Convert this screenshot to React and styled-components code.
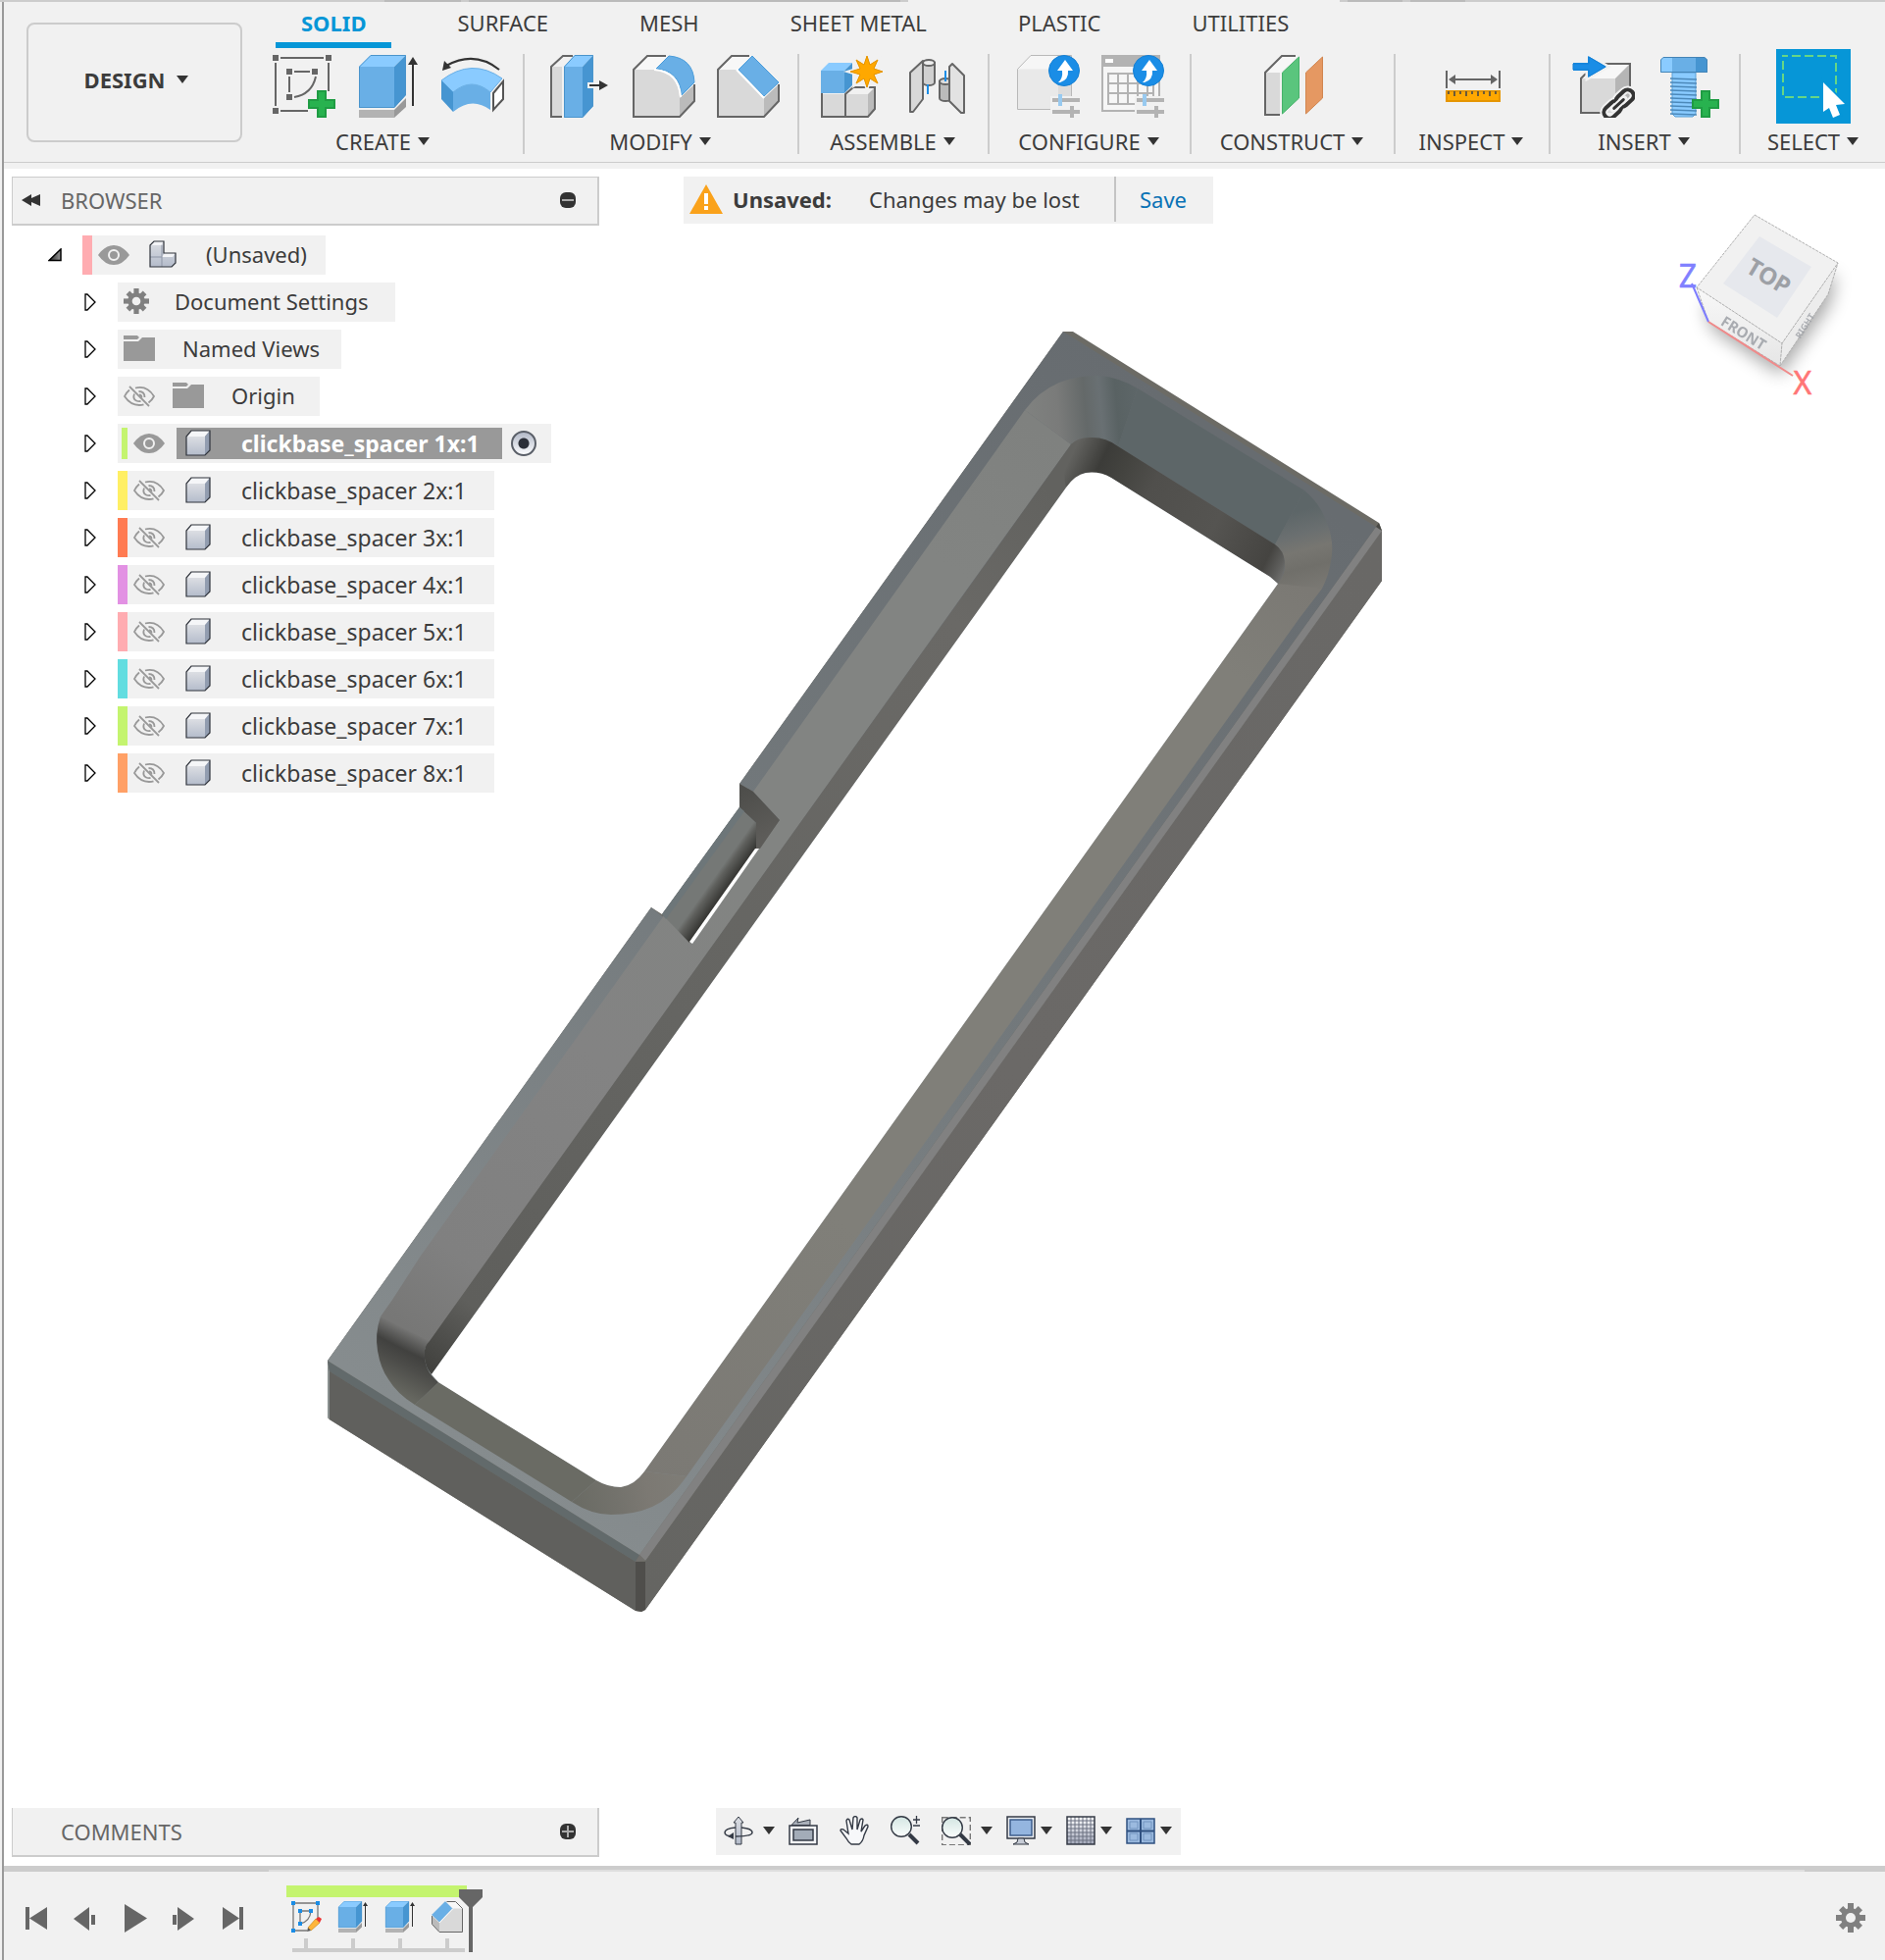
import React from "react";
import styled, { createGlobalStyle } from "styled-components";

const GlobalStyle = createGlobalStyle`
  *, *::before, *::after { box-sizing: border-box; }
  body {
    margin: 0;
    background: #f1f1f1;
    color: #3c3c3c;
    font: 22px/30px "Noto Sans", "Open Sans", sans-serif;
  }
  button {
    display: inline-flex;
    align-items: center;
    justify-content: center;
    margin: 0;
    padding: 0;
    border: 0;
    background: none;
    color: inherit;
    font: inherit;
    cursor: pointer;
  }
  svg { display: block; flex: none; }
  ul { margin: 0; padding: 0; list-style: none; }
`;

/* ---------- frame ---------- */

const Page = styled.div`
  display: flex;
  flex-direction: column;
  min-height: 100vh;
`;

const WindowEdge = styled.div`
  display: flex;
  height: 2px;
`;

const EdgePart = styled.span`
  flex: ${(p) => (p.$grow ? "1 0 0" : `0 0 ${p.$w}px`)};
  background: ${(p) => p.$tone};
`;

const Frame = styled.div`
  flex: 1;
  display: flex;
  flex-direction: column;
  margin-left: 2px;
  border-left: 2px solid #999;
`;

/* ---------- toolbar ---------- */

const Toolbar = styled.header`
  display: flex;
  align-items: flex-start;
  height: 170px;
  background: #f1f1f1;
  background-image: linear-gradient(#ccc, #ccc);
  background-repeat: no-repeat;
  background-size: 100% 1px;
  background-position: 0 163px;
`;

const WorkspaceButton = styled.button`
  && {
    flex: none;
    width: 220px;
    height: 122px;
    margin: 21px 0 0 23px;
    padding: 0 0 6px 4px;
    gap: 12px;
    border: 2px solid #ccc;
    border-radius: 8px;
    font-weight: 700;
  }
`;

const Ribbon = styled.div`
  flex: 1;
  min-width: 0;
`;

const Tabs = styled.nav`
  display: flex;
  gap: 41px;
  padding-left: 34px;
`;

const Tab = styled.button`
  && {
    height: 47px;
    padding: 0 26px;
    align-items: center;
    border-bottom: 6px solid ${(p) => (p.$active ? "#0696d7" : "transparent")};
    color: ${(p) => (p.$active ? "#0696d7" : "inherit")};
    font-weight: ${(p) => (p.$active ? 700 : 400)};
  }
`;

const Groups = styled.div`
  display: flex;
`;

const Group = styled.section`
  flex: none;
  display: flex;
  flex-direction: column;
  align-items: center;
  width: ${(p) => p.$w}px;
  padding-top: 1px;

  & + & {
    background: linear-gradient(#ccc, #ccc) no-repeat 0 6px / 2px 102px;
  }
`;

const Tools = styled.div`
  display: flex;
  align-items: center;
  gap: 22px;
  height: 76px;
  margin-left: ${(p) => p.$shift}px;
  margin-bottom: 3px;
`;

const MenuButton = styled.button`
  gap: 7px;
  height: 30px;
`;

/* ---------- canvas ---------- */

const Viewport = styled.main`
  position: relative;
  flex: 1;
  display: flex;
  flex-direction: column;
  justify-content: space-between;
  padding: 8px 0 9px 8px;
  background: #fff;
`;

const ModelSvg = styled.svg`
  position: absolute;
  inset: 0;
  width: 100%;
  height: 100%;
`;

const OverlayRow = styled.div`
  position: relative;
  display: grid;
  grid-template-columns: 1fr auto 1fr;
  align-items: start;
`;

const Panel = styled.div`
  display: flex;
  align-items: center;
  width: 599px;
  max-width: 100%;
  height: 50px;
  padding: 0 22px ${(p) => (p.$open ? 0 : 2)}px ${(p) => (p.$open ? 49 : 9)}px;
  gap: 20px;
  background: #f1f1f1;
  border: solid #ccc;
  border-width: ${(p) => (p.$open ? 0 : 1)}px 2px 2px 1px;
  color: #666;
`;

const PanelTitle = styled.span`
  flex: 1;
`;

const Banner = styled.div`
  display: flex;
  align-items: center;
  width: 540px;
  height: 48px;
  padding: 0 0 2px 6px;
  background: #f1f1f1;
`;

const BannerTitle = styled.strong`
  width: 139px;
  margin-left: 10px;
`;

const BannerText = styled.span`
  flex: 1;
`;

const SaveButton = styled.button`
  && {
    justify-content: flex-start;
    width: 101px;
    height: 46px;
    padding-left: 24px;
    border-left: 2px solid #c4c4c4;
    color: #0a72b5;
  }
`;

const CubeSvg = styled.svg`
  justify-self: end;
  margin: 25px 32px 0 0;
`;

/* ---------- browser tree ---------- */

const Tree = styled.ul`
  display: flex;
  flex-direction: column;
  gap: 8px;
  && { margin-top: 10px; }
`;

const TreeItem = styled.li`
  display: flex;
  align-items: center;
  height: 40px;
  padding-left: ${(p) => (p.$root ? 37 : 74)}px;
`;

const Expander = styled.button`
  && {
    justify-content: flex-start;
    width: ${(p) => (p.$root ? 35 : 34)}px;
    height: 40px;
  }
`;

const RowBody = styled.div`
  display: flex;
  align-items: center;
  height: 40px;
  padding-right: ${(p) => p.$end}px;
  background: #f1f1f1;
`;

const ColorBar = styled.span`
  width: ${(p) => (p.$active ? 6 : 10)}px;
  height: ${(p) => (p.$active ? 32 : 40)}px;
  margin-left: ${(p) => (p.$active ? 4 : 0)}px;
  background: ${(p) => p.$color};
`;

const EyeButton = styled.button`
  && {
    width: 32px;
    height: 32px;
    margin-left: 6px;
  }
`;

const Label = styled.button`
  && {
    height: 32px;
    margin-left: ${(p) => p.$before}px;
    padding-bottom: ${(p) => (p.$component ? 1 : 2)}px;
    gap: ${(p) => p.$gap}px;
    white-space: pre;
    font-size: ${(p) => (p.$component ? 23 : 22)}px;
  }
`;

const ActiveLabel = styled(Label)`
  && {
    justify-content: flex-start;
    width: 332px;
    padding-left: 9px;
    background: #999;
    color: #fff;
    font-weight: 700;
  }
`;

const ActiveRadio = styled.input`
  appearance: none;
  width: 26px;
  height: 26px;
  margin: 0 0 0 9px;
  border: 2px solid #5a5f68;
  border-radius: 50%;
  background: radial-gradient(circle, #2b2f38 0 5px, transparent 6px),
    linear-gradient(#b4bac8, #fafbfd);
`;

/* ---------- navigation bar ---------- */

const NavBar = styled.div`
  display: flex;
  align-items: center;
  width: 474px;
  height: 48px;
  padding: 0 8px 2px;
  background: #f1f1f1;
`;

const NavButton = styled.button`
  && {
    flex: none;
    height: 40px;
    margin-right: ${(p) => (p.$menu ? 14 : 22)}px;
    gap: ${(p) => (p.$wide ? 10 : 5)}px;
  }
`;

/* ---------- timeline ---------- */

const Timeline = styled.footer`
  display: flex;
  align-items: flex-start;
  height: 96px;
  padding: 16px 20px 0 8px;
  border-top: 4px solid #ccc;
  background:
    linear-gradient(#dedede, #dedede) 270px 0 / calc(100% - 352px) 2px no-repeat,
    linear-gradient(#ccc, #ccc) 0 0 / 100% 2px no-repeat,
    #f1f1f1;
`;

const Playback = styled.div`
  display: flex;
  padding-top: 9px;
`;

const PlayButton = styled.button`
  && {
    width: 50px;
    height: 48px;
  }
`;

const Track = styled.div`
  position: relative;
  display: flex;
  flex-direction: column;
  margin-left: 26px;
`;

const TrackGroup = styled.span`
  height: 12px;
  margin: 0 4px 4px;
  background: #c4f46f;
`;

const Features = styled.div`
  display: flex;
`;

const Feature = styled.button`
  && {
    width: 48px;
    height: 48px;
    flex-direction: column;
    justify-content: space-between;
  }
  &::after {
    content: "";
    width: 4px;
    height: 10px;
    background: #ccc;
  }
`;

const Rail = styled.span`
  height: 4px;
  margin: 0 6px 0 10px;
  background: #ccc;
`;

const Marker = styled.svg`
  position: absolute;
  top: 4px;
  right: -12px;
`;

const SettingsButton = styled.button`
  && {
    margin: 18px 0 0 auto;
  }
`;

/* ---------- small glyphs ---------- */

const Caret = () => (
  <svg width="12" height="8" viewBox="0 0 12 8" aria-hidden="true">
    <path d="M0 0h12L6 8z" fill="#333" />
  </svg>
);

const Icon = ({ size = 64, children, vb }) => (
  <svg width={size} height={size} viewBox={vb || `0 0 ${size} ${size}`} aria-hidden="true">
    {children}
  </svg>
);

const Plus = () => (
  <path d="M46 37h8v9h9v8h-9v9h-8v-9h-9v-8h9z" fill="#28b24f" stroke="#1f9c43" strokeWidth="2" />
);

/* ---------- ribbon icons ---------- */

const SketchIcon = () => (
  <Icon>
    <path d="M0 0h6v6H0zM54 0h6v6h-6zM0 54h6v6H0zM14 14h6v6h-6zM40 14h6v6h-6zM14 40h6v6h-6z" fill="#666" />
    <path
      d="M8 3h44M3 8v44M57 8v29M8 57h28M22 17h16M17 22v16M44 22Q40 40 22 43"
      fill="none"
      stroke="#666"
      strokeWidth="2"
    />
    <Plus />
  </Icon>
);

const ExtrudeShape = () => (
  <>
    <path d="M2 12h36v42H2z" fill="#69afe6" />
    <path d="M2 12 14 0h36L38 12z" fill="#8acbff" />
    <path d="M38 12 50 0v41L38 54z" fill="#4695d1" />
    <path d="M2.500 53.500V12L14 .500h35.500v40L38 53.500z" fill="none" stroke="#4a94cc" strokeWidth="1" />
    <path d="M2 56h36v8H2z" fill="#b3b3b3" />
    <path d="M38 56 50 44v9L38 64z" fill="#999" />
    <path d="M57 52V8" stroke="#333" strokeWidth="2" />
    <path d="M52 10h10L57 2z" fill="#333" />
  </>
);

const ExtrudeIcon = () => (
  <Icon>
    <ExtrudeShape />
  </Icon>
);

const RevolveIcon = () => (
  <Icon>
    <path d="M59 15Q34-5 5 11" fill="none" stroke="#333" strokeWidth="2" />
    <path d="M1 16 3 6l7 7z" fill="#333" />
    <path d="M0 26Q31 2 62 24L50 38Q31 22 12 38z" fill="#8acbff" stroke="#69afe6" strokeWidth="1" />
    <path d="M12 38Q31 22 50 38v18Q31 42 12 58z" fill="#69afe6" />
    <path d="M0 26l12 12v20L0 45z" fill="#4695d1" />
    <path d="M53 39 63 27v18L53 56z" fill="#fff" stroke="#555" strokeWidth="2" />
  </Icon>
);

const PressPullIcon = () => (
  <Icon>
    <path d="M3 12h11v51H3z" fill="#d9d9d9" />
    <path d="M3 12 15 1h11L15 12z" fill="#f1f1f1" />
    <path d="M25 1H15L3 12v51h11" fill="none" stroke="#666" strokeWidth="2" />
    <path d="M16 12h19v52H16z" fill="#69afe6" />
    <path d="M16 12 27 0h19L35 12z" fill="#8acbff" />
    <path d="M35 12 46 0v52L35 64z" fill="#4695d1" />
    <path d="M16.500 63.500V12L27 .500h18.500V52L35 63.500z" fill="none" stroke="#4a94cc" />
    <path d="M40 31h14" stroke="#f1f1f1" strokeWidth="6" />
    <path d="M42 31h12" stroke="#333" strokeWidth="2" />
    <path d="M52 26v10l9-5z" fill="#333" />
  </Icon>
);

const FilletIcon = () => (
  <Icon>
    <path d="M1 15 15 1h20L24 15z" fill="#f7f7f7" />
    <path d="M1 15h23Q46 17 48 43v20H1z" fill="#d9d9d9" />
    <path d="M48 44 63 30v17L48 63z" fill="#bbb" />
    <path d="M34 1H15L1 15v48h47l15-16V30" fill="none" stroke="#666" strokeWidth="2" />
    <path d="M24 14 37 1Q62 3 63 28L50 41Q48 16 24 14z" fill="#69afe6" stroke="#4a9ddb" strokeWidth="1" />
    <path d="M22 15Q47 17 49 43" fill="none" stroke="#fff" strokeWidth="2" />
  </Icon>
);

const ChamferShape = () => (
  <>
    <path d="M1 15 15 1h20L22 15z" fill="#f7f7f7" />
    <path d="M1 15h20l27 28v20H1z" fill="#d9d9d9" />
    <path d="M48 44 63 30v17L48 63z" fill="#bbb" />
    <path d="M33 1H15L1 15v48h47l15-16V30" fill="none" stroke="#666" strokeWidth="2" />
    <path d="M22 15 36 1l27 27-15 14z" fill="#69afe6" stroke="#4a9ddb" strokeWidth="1" />
    <path d="M20 15l28 29" stroke="#fff" strokeWidth="2" />
  </>
);

const ChamferIcon = () => (
  <Icon>
    <ChamferShape />
  </Icon>
);

const NewComponentIcon = () => (
  <Icon>
    <path d="M1 40h24v23H1zM25 40h23v23H25z" fill="#d9d9d9" />
    <path d="M25 40l8-7h22l-7 7z" fill="#f1f1f1" />
    <path d="M48 40l7-7v22l-7 8z" fill="#bbb" />
    <path d="M1 39v24h47l7-8V33H33l-8 7v23" fill="none" stroke="#666" strokeWidth="2" />
    <path d="M0 16h24v23H0z" fill="#69afe6" />
    <path d="M0 16 8 8h24l-8 8z" fill="#8acbff" />
    <path d="M24 16 32 8v23l-8 8z" fill="#4695d1" />
    <path
      d="M47 1l3 9 8-5-4 9 9 3-9 3 4 9-8-5-3 9-3-9-8 5 4-9-10-3 10-3-4-9 8 5z"
      fill="#ffa800"
      stroke="#f1f1f1"
      strokeWidth="4"
      paintOrder="stroke"
    />
    <path d="M47 1l3 9 8-5-4 9 9 3-9 3 4 9-8-5-3 9-3-9-8 5 4-9-10-3 10-3-4-9 8 5z" fill="#ffa800" stroke="#e59500" strokeWidth="1" />
  </Icon>
);

const JointIcon = () => (
  <Icon>
    <path d="M5 18 18 6v39L8 58H5z" fill="#d9d9d9" stroke="#666" strokeWidth="2" strokeLinejoin="round" />
    <path d="M18 8v20a6 3 0 0 0 12 0V8z" fill="#d0d0d0" stroke="#666" strokeWidth="2" />
    <ellipse cx="24" cy="8" rx="6" ry="3" fill="#eee" stroke="#666" strokeWidth="2" />
    <path d="M23 30v10" stroke="#1a8de6" strokeWidth="2" />
    <path d="M35 27v17a6 3 0 0 0 12 0V27z" fill="#bbb" stroke="#666" strokeWidth="2" />
    <ellipse cx="41" cy="27" rx="6" ry="3" fill="#ddd" stroke="#666" strokeWidth="2" />
    <path d="M45 12l3-3 12 12v38h-3L45 47z" fill="#e2e2e2" stroke="#666" strokeWidth="2" strokeLinejoin="round" />
    <path d="M41 16v11" stroke="#1a8de6" strokeWidth="2" />
  </Icon>
);

const ConfigBadge = () => (
  <>
    <path d="M34 42h30v22H34z" fill="#f1f1f1" />
    <path d="M36 46h28M36 58h28M56 52v12" stroke="#b3b3b3" strokeWidth="4" />
    <path d="M44 40v12" stroke="#98caf0" strokeWidth="4" />
    <circle cx="48" cy="16" r="15.500" fill="#1a8de6" stroke="#1580d4" />
    <path d="M49 5l8 11h-5q1 9-8 12h-2q5-4 4-12h-5z" fill="#fff" />
  </>
);

const ConfigureIcon = () => (
  <Icon>
    <path d="M.500 14.500 14 .500h41L42 14.500z" fill="#f6f6f6" />
    <path d="M.500 14.500H42V55H.500z" fill="#e9e9e9" />
    <path d="M42 14 55 1v41L42 55z" fill="#dcdcdc" />
    <path d="M55.500 42V.500H14L.500 14.500V55.500H36" fill="none" stroke="#b9b9b9" />
    <ConfigBadge />
  </Icon>
);

const ConfigTableIcon = () => (
  <Icon>
    <path d="M1 1h58v56H1z" fill="#f6f6f6" stroke="#b3b3b3" strokeWidth="2" />
    <path d="M0 0h60v12H0z" fill="#b3b3b3" />
    <path d="M4 4h8v4H4z" fill="#fff" />
    <path d="M7 19h46v31H7zM17 19v31M27 19v31M37 19v31M47 19v31M7 29h46M7 39h46" fill="none" stroke="#b3b3b3" strokeWidth="2" />
    <ConfigBadge />
  </Icon>
);

const PlaneIcon = () => (
  <Icon>
    <path d="M3 18 20 1h16L19 18z" fill="#f7f7f7" />
    <path d="M3 18h15v43H3z" fill="#d9d9d9" />
    <path d="M34 1H20L3 18v43h15" fill="none" stroke="#666" strokeWidth="2" />
    <path d="M20.500 18 37.500 2v42L20.500 60z" fill="#5ac57d" stroke="#46b26a" />
    <path d="M44.500 18 61.500 2v42L44.500 60z" fill="#e59862" stroke="#d18650" />
  </Icon>
);

const MeasureIcon = () => (
  <Icon>
    <path d="M5 16v18M59 16v18M10 25h44" stroke="#666" strokeWidth="2" />
    <path d="M7 25l7-5v10zM57 25l-7-5v10z" fill="#666" />
    <path d="M5 37h54v10H5z" fill="#ffa800" stroke="#e59500" strokeWidth="2" />
    <path d="M7 37v3M13 37v5M19 37v3M25 37v5M31 37v3M37 37v5M43 37v3M49 37v5M55 37v3" stroke="#6b5a3a" strokeWidth="2" />
  </Icon>
);

const DeriveIcon = () => (
  <Icon>
    <path d="M9 24 24 9h35L44 24z" fill="#f7f7f7" />
    <path d="M9 24h35v35H9z" fill="#d9d9d9" />
    <path d="M44 24 59 9v34L44 59z" fill="#b5b5b5" />
    <path d="M30 59H9V24L24 9h35v27" fill="none" stroke="#666" strokeWidth="2" />
    <path d="M1 8h15V1l19 11-19 11v-7H1z" fill="#1a8de6" stroke="#f1f1f1" strokeWidth="5" paintOrder="stroke" />
    <path d="M1 9h16V2l17 10-17 10v-7H1z" fill="#1a8de6" stroke="#1580d4" />
    <g fill="none" strokeLinecap="round" transform="rotate(-43 47.500 50)">
      <g stroke="#f1f1f1" strokeWidth="8">
        <rect x="29" y="44" width="20" height="12" rx="6" />
        <rect x="46" y="44" width="20" height="12" rx="6" />
      </g>
      <g stroke="#333" strokeWidth="4">
        <rect x="29" y="44" width="20" height="12" rx="6" />
        <rect x="46" y="44" width="20" height="12" rx="6" />
        <path d="M40 50h15" stroke="#f1f1f1" strokeWidth="7" />
        <path d="M41 50h13" strokeWidth="3" />
      </g>
    </g>
  </Icon>
);

const BoltIcon = () => (
  <Icon>
    <path d="M16 18h24v42l-3 3H19l-3-3z" fill="#8acbff" stroke="#5b9fd4" />
    <path
      d="M14 24l27 1M14 28l27 1M14 32l27 1M14 36l27 1M14 40l27 1M14 44l27 1M14 48l27 1M14 52l27 1M14 56l27 1M14 60l27 1"
      stroke="#4c89ba"
      strokeWidth="1.500"
    />
    <path d="M4 5l3-3h9v16H4z" fill="#8acbff" />
    <path d="M16 2h24v16H16z" fill="#69afe6" />
    <path d="M40 2h9l3 3v13H40z" fill="#4695d1" />
    <path d="M4.500 5 7 2.500h42L51.500 5v12.500h-47z" fill="none" stroke="#4484b6" />
    <path d="M36 48h10V36h10v10h8" fill="none" stroke="#f1f1f1" strokeWidth="5" />
    <Plus />
  </Icon>
);

const SelectIcon = () => (
  <Icon size={76}>
    <path d="M0 0h76v76H0z" fill="#0696d7" />
    <rect x="7" y="7" width="54" height="42" fill="none" stroke="#66d685" strokeWidth="2" strokeDasharray="9 4" strokeDashoffset="4" />
    <path d="M48 34v30l6-4 4 10 7-3-4-10 9-1z" fill="#fff" stroke="#0696d7" strokeWidth="4" paintOrder="stroke" />
  </Icon>
);

/* ---------- browser icons ---------- */

const RootArrow = () => (
  <Icon size={14}>
    <defs>
      <linearGradient id="rootArrow" x1="0" x2="1">
        <stop offset="0" stopColor="#222" />
        <stop offset="1" stopColor="#999" />
      </linearGradient>
    </defs>
    <path d="M1 12.500 13 1v11.500z" fill="url(#rootArrow)" stroke="#000" strokeWidth="1.500" />
  </Icon>
);

const RowArrow = () => (
  <svg width="12" height="18" viewBox="0 0 12 18" aria-hidden="true">
    <path d="M1 1h2l8 8-8 8H1z" fill="#fff" stroke="#000" strokeWidth="1.300" />
  </svg>
);

const EyeOn = () => (
  <Icon size={32}>
    <path d="M0 16Q7 6 16 6t16 10Q25 26 16 26T0 16z" fill="#999" />
    <circle cx="16" cy="16" r="5" fill="none" stroke="#f1f1f1" strokeWidth="2" />
  </Icon>
);

const EyeOff = () => (
  <Icon size={32}>
    <g fill="none" stroke="#999" strokeWidth="1.800">
      <path d="M6 9.500Q2.500 12.500 1 16q6 9 15 9 2.500 0 4.500-.700M12 7.500Q24 4.500 31 16q-2 4-5.500 6.500" />
      <path d="M11 13.500q-2 5 2 7 2 1 4.500.500M15.500 11q6 0 6 6M16 14.500q2.500 0 2.500 3" />
      <path d="M6 6l20 20" />
    </g>
  </Icon>
);

const Gear = ({ size }) => (
  <Icon size={size} vb="0 0 30 30">
    <g fill="#808080">
      <path d="M12 0h6v30h-6z" />
      <path d="M0 12h30v6H0z" />
      <path d="M12 1h6v28h-6z" transform="rotate(45 15 15)" />
      <path d="M12 1h6v28h-6z" transform="rotate(-45 15 15)" />
      <circle cx="15" cy="15" r="10" />
    </g>
    <circle cx="15" cy="15" r="5" fill="#f1f1f1" />
  </Icon>
);

const Folder = () => (
  <Icon size={32}>
    <path d="M0 3h14l2 2-2 2H0zM0 9h15l4-4h13v24H0z" fill="#999" />
  </Icon>
);

const SharedGradients = () => (
  <svg width="0" height="0" style={{ position: "absolute" }} aria-hidden="true">
    <defs>
      <linearGradient id="body" x1="0" y1="0" x2="0" y2="1">
        <stop offset="0" stopColor="#dcdee3" />
        <stop offset="1" stopColor="#b4bccb" />
      </linearGradient>
      <linearGradient id="lens" x1="0" y1="0" x2="0" y2="1">
        <stop offset="0" stopColor="#d3e5e2" />
        <stop offset="1" stopColor="#fbfefd" />
      </linearGradient>
      <linearGradient id="metal" x1="0" y1="0" x2="0" y2="1">
        <stop offset="0" stopColor="#fff" />
        <stop offset="1" stopColor="#a3a8ba" />
      </linearGradient>
    </defs>
  </svg>
);

const BodyIcon = () => (
  <svg width="26" height="28" viewBox="0 0 26 28" aria-hidden="true">
    <path d="M1 7h19v19H1z" fill="url(#body)" />
    <path d="M1 7 6 1h19l-5 6z" fill="#f5f6f8" />
    <path d="M20 7l5-6v20l-5 5z" fill="#929db0" />
    <path d="M1 26V7l5-6h19v20l-5 5z" fill="none" stroke="#30343c" strokeWidth="1.200" />
  </svg>
);

const AssemblyIcon = () => (
  <Icon size={28}>
    <path d="M1 5l4-4h10v12h12v10l-4 4H1z" fill="url(#body)" />
    <path d="M1 5l4-4h10l-3 4zM13 17l3-4h11l-3 4z" fill="#f3f4f7" />
    <path d="M1 17h12v10M13 17V5" fill="none" stroke="#8e96a6" />
    <path d="M1 27V5l4-4h10v12h12v10l-4 4z" fill="none" stroke="#30343c" strokeWidth="1.200" />
  </Icon>
);

/* ---------- navigation icons ---------- */

const ink = "#343a45";

const OrbitIcon = () => (
  <Icon size={30}>
    <path d="M15 1l5 6h-2v22h-6V7h-2z" fill="url(#body)" stroke={ink} />
    <path d="M12 12Q1 13 1 17t9 4M18 12q11 1 11 5t-17 4" fill="none" stroke={ink} strokeWidth="1.500" />
    <path d="M4 21l6-4v7z" fill={ink} />
  </Icon>
);

const LookIcon = () => (
  <Icon size={30}>
    <path d="M3 9.500 10 2 9 7l13-3v5.500z" fill="#a9afb9" stroke={ink} />
    <path d="M1 10h28v19H1z" fill="#f3f4f7" stroke={ink} strokeWidth="1.500" />
    <path d="M5 14h20v11H5z" fill="#a3acb8" stroke={ink} strokeWidth="1.500" />
  </Icon>
);

const PanIcon = () => (
  <Icon size={30}>
    <path
      d="M12 29Q9 27 7 23L1 15q0-2 3-1l5 4L7 5q1-3 3-1l3 10 1-12q2-3 4 0v12l3-10q2-2 3 0l-2 12 4-6q3-2 3 1l-4 9q-1 6-5 9z"
      fill="#f7f8fa"
      stroke={ink}
      strokeWidth="1.400"
    />
  </Icon>
);

const ZoomIcon = () => (
  <Icon size={30}>
    <path d="M19 19l9 9" stroke={ink} strokeWidth="4" />
    <circle cx="11" cy="11" r="10.300" fill="url(#lens)" stroke={ink} strokeWidth="1.400" />
    <path d="M23 4h7M26.500 0v8M23 10h7" stroke={ink} strokeWidth="1.300" />
  </Icon>
);

const ZoomWindowIcon = () => (
  <Icon size={30}>
    <path d="M.700 1.700h28.600v28H.700z" fill="none" stroke="#777" strokeWidth="1.400" strokeDasharray="6 3" />
    <path d="M19 19l10 10" stroke={ink} strokeWidth="4" />
    <circle cx="11" cy="12" r="10.300" fill="url(#lens)" stroke={ink} strokeWidth="1.400" />
  </Icon>
);

const DisplayIcon = () => (
  <Icon size={30}>
    <path d="M1 1h28v22H1z" fill="#eef0f3" stroke={ink} strokeWidth="1.500" />
    <path d="M4 4h22v16H4z" fill="#94b5df" stroke="#3c5c8c" strokeWidth="1.500" />
    <path d="M12 23h6l1 4 4 2H7l4-2z" fill="#c7ccd6" stroke={ink} />
  </Icon>
);

const GridIcon = () => (
  <Icon size={30}>
    <path d="M1 1h28v28H1z" fill="url(#metal)" />
    <path d="M5 1v28M9 1v28M13 1v28M17 1v28M21 1v28M25 1v28M1 5h28M1 9h28M1 13h28M1 17h28M1 21h28M1 25h28" stroke="#6b7080" />
    <path d="M1 1h28v28H1z" fill="none" stroke={ink} strokeWidth="1.500" />
  </Icon>
);

const ViewportsIcon = () => (
  <Icon size={30}>
    <path d="M1 3h28v25H1z" fill="#9bbadf" stroke="#2f5080" strokeWidth="1.500" />
    <path d="M15 3v25M1 15.500h28" stroke="#2f5080" strokeWidth="2" />
    <path d="M4 6h8v7H4zM18 6h8v7h-8zM4 18h8v7H4zM18 18h8v7h-8z" fill="none" stroke="#7394c0" />
  </Icon>
);

/* ---------- timeline icons ---------- */

const FeatureSketch = () => (
  <Icon size={32}>
    <path d="M3 2h25v16M3 2v28h14M10 10h11M10 10v13M21 10q-1 11-11 13" fill="none" stroke="#777" strokeWidth="1.300" />
    <path d="M1 0h4v4H1zM26 0h4v4h-4zM1 28h4v4H1zM8 8h4v4H8zM19 8h4v4h-4zM8 21h4v4H8z" fill="#1a8de6" />
    <path d="M18 27l8-9 4 4-9 8z" fill="#ffb53a" stroke="#c98a1c" strokeWidth=".700" />
    <path d="M26 18l3-2 3 2-2 4z" fill="#e33" />
    <path d="M18 27l3 3-4 1z" fill="#555" />
  </Icon>
);

const FeatureExtrude = () => (
  <Icon size={32} vb="0 0 64 64">
    <ExtrudeShape />
  </Icon>
);

const FeatureChamfer = () => (
  <Icon size={32} vb="0 0 64 64">
    <g transform="matrix(-1 0 0 1 64 0)">
      <ChamferShape />
    </g>
  </Icon>
);

/* ---------- view cube ---------- */

const ViewCube = () => (
  <CubeSvg width="190" height="210" viewBox="1700 205 190 210" role="img" aria-label="View cube">
    <defs>
      <filter id="soft" x="-30%" y="-30%" width="160%" height="160%">
        <feGaussianBlur stdDeviation="9" />
      </filter>
      <linearGradient id="frontFace" x1="0" y1="0" x2="0" y2="1">
        <stop offset="0" stopColor="#f8f8f8" />
        <stop offset="1" stopColor="#e6e6e6" />
      </linearGradient>
    </defs>
    <path d="M1738 310l8 26 70 46 50-72 6-30z" fill="#000" opacity=".34" filter="url(#soft)" />
    <path d="M1730 293l87 57-2 23-73-45z" fill="url(#frontFace)" />
    <path d="M1817 350l57-82-10 32-49 73z" fill="#ececec" />
    <path d="M1789 219l85 49-57 82-87-57z" fill="#f1f1f1" />
    <path d="M1794 241l53 31-35 52-55-35z" fill="#e6e8ed" />
    <path
      d="M1789 219l85 49-57 82-87-57zM1730 293l12 35 73 45 2-23M1815 373l49-73 10-32"
      fill="none"
      stroke="#b0b0b0"
      strokeDasharray="3 1"
    />
    <g fontFamily="Noto Sans, sans-serif" fontWeight="700" fill="#9da0a6" textAnchor="middle">
      <text fontSize="24" transform="translate(1799 289) rotate(31)">TOP</text>
      <text fontSize="15" opacity=".85" transform="translate(1775 344) rotate(32)">FRONT</text>
      <text fontSize="9" opacity=".8" transform="translate(1843 334) rotate(-57)">RIGHT</text>
    </g>
    <path d="M1725 289l17 39" stroke="#7c7cff" strokeWidth="2" />
    <path d="M1742 328l86 55" stroke="#f08a8a" strokeWidth="2" />
    <g fontFamily="Noto Sans, sans-serif" fontSize="32" textAnchor="middle" strokeWidth=".500">
      <text x="1721" y="293" fill="#8080ff" stroke="#8080ff">Z</text>
      <text x="1838" y="402" fill="#ff7676" stroke="#ff7676">X</text>
    </g>
  </CubeSvg>
);

/* ---------- spacer model ---------- */

const Grad = ({ id, from, to, stops }) => (
  <linearGradient id={id} gradientUnits="userSpaceOnUse" x1={from[0]} y1={from[1]} x2={to[0]} y2={to[1]}>
    {stops.map(([o, c]) => (
      <stop key={o} offset={o} stopColor={c} />
    ))}
  </linearGradient>
);

const Model = () => (
  <ModelSvg viewBox="4 172 1918 1730" role="img" aria-label="clickbase_spacer 1x model">
    <defs>
      <Grad id="topFace" from={[1240, 440]} to={[490, 1490]} stops={[[0, "#676c70"], [0.5, "#73797c"], [1, "#868c8e"]]} />
      <Grad id="leftBevel" from={[1050, 430]} to={[410, 1350]} stops={[[0, "#7f817f"], [0.15, "#828482"], [0.5, "#828482"], [0.7, "#838383"], [0.92, "#808080"], [1, "#777776"]]} />
      <Grad id="leftWall" from={[1070, 500]} to={[440, 1395]} stops={[[0, "#62625f"], [0.15, "#6a6966"], [0.6, "#656562"], [0.93, "#5f5f5c"], [1, "#42423f"]]} />
      <Grad id="topWall" from={[1085, 480]} to={[1310, 590]} stops={[[0, "#62625f"], [0.12, "#3c3c39"], [0.22, "#444440"], [0.35, "#504f4c"], [0.65, "#555451"], [0.9, "#454441"], [0.96, "#5f5f5d"], [1, "#777775"]]} />
      <Grad id="rightBevel" from={[1330, 600]} to={[670, 1530]} stops={[[0, "#7b7974"], [0.1, "#807f79"], [0.7, "#807f79"], [1, "#7b7974"]]} />
      <Grad id="side" from={[1400, 560]} to={[660, 1620]} stops={[[0, "#696866"], [0.5, "#6b6967"], [1, "#656562"]]} />
      <Grad id="cornerTL" from={[1045, 430]} to={[1160, 420]} stops={[[0, "#808280"], [0.3, "#7a7b7a"], [0.54, "#646969"], [0.68, "#697073"], [0.82, "#596263"], [1, "#5d6668"]]} />
      <Grad id="cornerTR" from={[1312, 524]} to={[1334, 610]} stops={[[0, "#5d6668"], [0.25, "#6a6f70"], [0.45, "#777671"], [0.65, "#706f6a"], [1, "#7d7b76"]]} />
      <Grad id="cornerBL" from={[412, 1353]} to={[384, 1408]} stops={[[0, "#787877"], [0.33, "#41413f"], [0.55, "#4c4c49"], [1, "#666760"]]} />
      <Grad id="cornerBR" from={[583, 1520]} to={[690, 1500]} stops={[[0, "#6a6b64"], [0.4, "#73726c"], [0.7, "#7c7973"], [1, "#7e7c76"]]} />
      <Grad id="slotBar" from={[710, 884]} to={[741, 906]} stops={[[0, "#70797b"], [0.15, "#757876"], [0.55, "#757876"], [0.68, "#5f605d"], [1, "#363633"]]} />
      <Grad id="slotEnd" from={[760, 805]} to={[785, 850]} stops={[[0, "#4e4e4b"], [1, "#5d5c59"]]} />
    </defs>

    <path d="M1084 338h10l312 195 3 8v51L658 1641l-4 2-6-1-312-195-2-2v-58L664 925l11 7 79-109v-24z" fill="#6c6b65" />
    <path d="M658 1591 1409 541v51L658 1641z" fill="url(#side)" />
    <path d="M336 1398l312 194v50L336 1447z" fill="#60605d" />
    <path d="M334 1387l2 11v49l-2-2z" fill="#8b9190" />
    <path d="M648 1592h10v49l-4 2-6-1z" fill="#4f4e4b" />
    <path d="M334 1387l318 198-4 7-312-194z" fill="#626a6b" />
    <path d="M652 1585 1403 537l6 4L658 1591z" fill="#818181" />
    <path d="M652 1585l6 6-10 1z" fill="#71706d" />
    <path d="M1403 537l3-4 3 8z" fill="#484844" />

    <path d="M1084 338l319 199L652 1585 334 1387l330-462 14 11 90-129-14-8z" fill="url(#topFace)" />

    <path d="M1045 418 768 807l27 29-22 29-67 97-28-30L429 1280l-29 45-12 17 45 33L980 609l112-156z" fill="url(#leftBevel)" />
    <path d="M1160 396l170 104-30 55-160-100z" fill="#5d6668" />
    <path d="M1348 600l-23 30L700 1505l-43-5L1303 595l5-5z" fill="url(#rightBevel)" />
    <path d="M423 1432l160 99 25-22-161-100z" fill="#6a6b64" />
    <path d="M1045 418q14-19 35-28 20-8 42-7 20 2 38 13l-20 59q-10-8-20-8-18-2-28 6z" fill="url(#cornerTL)" />
    <path d="M1330 500q16 13 23 33 8 20 4 39-2 14-9 28l-45-5q8-12 7-20 0-12-10-20z" fill="url(#cornerTR)" />
    <path d="M388 1342q-6 18-3 35 3 18 11 29 9 15 27 26l24-23q-16-12-14-34l5-8z" fill="url(#cornerBL)" />
    <path d="M583 1531q20 13 40 13 24 0 42-8 20-9 35-31l-43-5q-10 14-24 16-13 0-25-7z" fill="url(#cornerBR)" />

    <path d="M1092 453 500 1280l-62 87q-7 7-5 18 1 9 7 16L1087 497l12-10v-38z" fill="url(#leftWall)" />
    <path d="M1087 497q-5-20 5-44 8-8 22-7 14 0 26 9l160 100q9 6 10 18 0 12-7 22l-8-7-162-101q-9-5-21-5-16 2-25 15z" fill="url(#topWall)" />
    <path
      d="M440 1401 1087 497q9-13 20-15 14-2 26 5l162 101 8 7L657 1500q-10 14-24 16-13 0-25-7L447 1409z"
      fill="#fff"
    />

    <path d="M754 799l14 8 27 29-20 29h-5l1-26-17-16z" fill="url(#slotEnd)" />
    <path d="M754 823l17 16v26l-68 96-28-29z" fill="url(#slotBar)" />
    <path d="M754 823l5 4-80 110-4-5z" fill="#6d7679" />
    <path d="M770 865h4l-68 97-3-2z" fill="#fff" />
  </ModelSvg>
);

/* ---------- data ---------- */

const tabs = ["SOLID", "SURFACE", "MESH", "SHEET METAL", "PLASTIC", "UTILITIES"];

const groups = [
  { name: "CREATE", width: 286, shift: 12, tools: [SketchIcon, ExtrudeIcon, RevolveIcon] },
  { name: "MODIFY", width: 280, shift: 8, tools: [PressPullIcon, FilletIcon, ChamferIcon] },
  { name: "ASSEMBLE", width: 194, shift: 4, tools: [NewComponentIcon, JointIcon] },
  { name: "CONFIGURE", width: 206, shift: 4, tools: [ConfigureIcon, ConfigTableIcon] },
  { name: "CONSTRUCT", width: 208, shift: 4, tools: [PlaneIcon] },
  { name: "INSPECT", width: 158, shift: 4, tools: [MeasureIcon] },
  { name: "INSERT", width: 194, shift: 4, tools: [DeriveIcon, BoltIcon] },
  { name: "SELECT", width: 151, shift: 0, tools: [SelectIcon] },
];

const components = [
  ["1x", "#c4f46f"],
  ["2x", "#ffef64"],
  ["3x", "#ff7b52"],
  ["4x", "#e291e3"],
  ["5x", "#ffacb1"],
  ["6x", "#62dde0"],
  ["7x", "#c4f46f"],
  ["8x", "#ffa066"],
];

const navTools = [
  { name: "Orbit", icon: OrbitIcon, menu: true, wide: true },
  { name: "Look at", icon: LookIcon },
  { name: "Pan", icon: PanIcon },
  { name: "Zoom", icon: ZoomIcon },
  { name: "Zoom window", icon: ZoomWindowIcon, menu: true, wide: true },
  { name: "Display settings", icon: DisplayIcon, menu: true },
  { name: "Grid and snaps", icon: GridIcon, menu: true },
  { name: "Viewports", icon: ViewportsIcon, menu: true },
];

const playback = [
  ["Go to start", "M3 13h4v23H3zM7 24.500 25 13v23z"],
  ["Step back", "M2 25 18 13v24zM20 21h4v10h-4z"],
  ["Play", "M4 10l23 14.500L4 39z"],
  ["Step forward", "M3 21h4v10H3zM8 13l17 12L8 37z"],
  ["Go to end", "M4 13l17 11.500L4 36zM21 13h4v23h-4z"],
];

const features = [
  ["Sketch", FeatureSketch],
  ["Extrude 1", FeatureExtrude],
  ["Extrude 2", FeatureExtrude],
  ["Chamfer", FeatureChamfer],
];

/* ---------- composition ---------- */

const Browser = () => (
  <section aria-label="Browser">
    <Panel>
      <button aria-label="Collapse browser">
        <svg width="20" height="12" viewBox="0 0 20 12">
          <path d="M0 6 10 0v4l9-4v12l-9-4v4z" fill="#333" />
        </svg>
      </button>
      <PanelTitle>BROWSER</PanelTitle>
      <button aria-label="Hide browser">
        <Icon size={16}>
          <rect width="16" height="16" rx="6" fill="#333" />
          <path d="M2 8h12" stroke="#aaa" strokeWidth="2" />
        </Icon>
      </button>
    </Panel>
    <Tree>
      <TreeItem $root>
        <Expander $root aria-label="Collapse document">
          <RootArrow />
        </Expander>
        <RowBody $end={19}>
          <ColorBar $color="#ffacb1" />
          <EyeButton aria-label="Hide document">
            <EyeOn />
          </EyeButton>
          <Label $before={20} $gap={30}>
            <AssemblyIcon />
            (Unsaved)
          </Label>
        </RowBody>
      </TreeItem>
      <TreeItem>
        <Expander aria-label="Expand document settings">
          <RowArrow />
        </Expander>
        <RowBody $end={28}>
          <Label $before={6} $gap={26}>
            <Gear size={26} />
            Document Settings
          </Label>
        </RowBody>
      </TreeItem>
      <TreeItem>
        <Expander aria-label="Expand named views">
          <RowArrow />
        </Expander>
        <RowBody $end={22}>
          <Label $before={6} $gap={28}>
            <Folder />
            Named Views
          </Label>
        </RowBody>
      </TreeItem>
      <TreeItem>
        <Expander aria-label="Expand origin">
          <RowArrow />
        </Expander>
        <RowBody $end={25}>
          <EyeButton aria-label="Show origin">
            <EyeOff />
          </EyeButton>
          <Label $before={18} $gap={28}>
            <Folder />
            Origin
          </Label>
        </RowBody>
      </TreeItem>
      {components.map(([size, color], i) => (
        <TreeItem key={size}>
          <Expander aria-label={`Expand ${size} spacer`}>
            <RowArrow />
          </Expander>
          {i === 0 ? (
            <RowBody $end={15}>
              <ColorBar $active $color={color} />
              <EyeButton aria-label="Hide component">
                <EyeOn />
              </EyeButton>
              <ActiveLabel $component $before={12} $gap={31}>
                <BodyIcon />
                {`clickbase_spacer ${size}:1`}
              </ActiveLabel>
              <ActiveRadio type="radio" name="activeComponent" defaultChecked aria-label="Activate component" />
            </RowBody>
          ) : (
            <RowBody $end={28}>
              <ColorBar $color={color} />
              <EyeButton aria-label="Show component">
                <EyeOff />
              </EyeButton>
              <Label $component $before={21} $gap={31}>
                <BodyIcon />
                {`clickbase_spacer ${size}:1`}
              </Label>
            </RowBody>
          )}
        </TreeItem>
      ))}
    </Tree>
  </section>
);

export default function App() {
  return (
    <Page>
      <GlobalStyle />
      <SharedGradients />
      <WindowEdge>
        <EdgePart $w={392} $tone="#ccc" />
        <EdgePart $w={78} $tone="#bbb" />
        <EdgePart $w={8} $tone="#ccc" />
        <EdgePart $w={440} $tone="#bbb" />
        <EdgePart $w={8} $tone="#ccc" />
        <EdgePart $grow $tone="#f1f1f1" />
        <EdgePart $w={8} $tone="#ccc" />
        <EdgePart $w={56} $tone="#bbb" />
        <EdgePart $w={8} $tone="#ccc" />
        <EdgePart $w={56} $tone="#bbb" />
        <EdgePart $w={428} $tone="#ccc" />
      </WindowEdge>
      <Frame>
        <Toolbar>
          <WorkspaceButton>
            DESIGN
            <Caret />
          </WorkspaceButton>
          <Ribbon>
            <Tabs>
              {tabs.map((t, i) => (
                <Tab key={t} $active={i === 0}>
                  {t}
                </Tab>
              ))}
            </Tabs>
            <Groups>
              {groups.map(({ name, width, shift, tools }) => (
                <Group key={name} $w={width}>
                  <Tools $shift={shift}>
                    {tools.map((Tool, i) => (
                      <button key={i} aria-label={`${name} tool ${i + 1}`}>
                        <Tool />
                      </button>
                    ))}
                  </Tools>
                  <MenuButton>
                    {name}
                    <Caret />
                  </MenuButton>
                </Group>
              ))}
            </Groups>
          </Ribbon>
        </Toolbar>

        <Viewport>
          <Model />
          <OverlayRow>
            <Browser />
            <Banner role="status">
              <svg width="34" height="30" viewBox="0 0 34 30" aria-hidden="true">
                <path d="M17 0 34 30H0z" fill="#faa21b" />
                <path d="M15 9h4v11h-4zM15 22h4v4h-4z" fill="#fff" />
              </svg>
              <BannerTitle>Unsaved:</BannerTitle>
              <BannerText>Changes may be lost</BannerText>
              <SaveButton>Save</SaveButton>
            </Banner>
            <ViewCube />
          </OverlayRow>
          <OverlayRow>
            <Panel $open>
              <PanelTitle>COMMENTS</PanelTitle>
              <button aria-label="Show comments">
                <Icon size={16}>
                  <rect width="16" height="16" rx="6" fill="#333" />
                  <path d="M2 8h12M8 2v12" stroke="#aaa" strokeWidth="2" />
                </Icon>
              </button>
            </Panel>
            <NavBar>
              {navTools.map(({ name, icon: NavIcon, menu, wide }) => (
                <NavButton key={name} $menu={menu} $wide={wide} aria-label={name}>
                  <NavIcon />
                  {menu && <Caret />}
                </NavButton>
              ))}
            </NavBar>
          </OverlayRow>
        </Viewport>

        <Timeline>
          <Playback>
            {playback.map(([name, d]) => (
              <PlayButton key={name} aria-label={name}>
                <svg width="28" height="48" viewBox="0 0 28 48">
                  <path d={d} fill="#666" />
                </svg>
              </PlayButton>
            ))}
          </Playback>
          <Track>
            <TrackGroup />
            <Features>
              {features.map(([name, FeatureIcon]) => (
                <Feature key={name} aria-label={name}>
                  <FeatureIcon />
                </Feature>
              ))}
            </Features>
            <Rail />
            <Marker width="24" height="64" viewBox="0 0 24 64">
              <path d="M0 0h24v8l-10 10v46h-4V18L0 8z" fill="#666" />
            </Marker>
          </Track>
          <SettingsButton aria-label="Timeline settings">
            <Gear size={30} />
          </SettingsButton>
        </Timeline>
      </Frame>
    </Page>
  );
}
